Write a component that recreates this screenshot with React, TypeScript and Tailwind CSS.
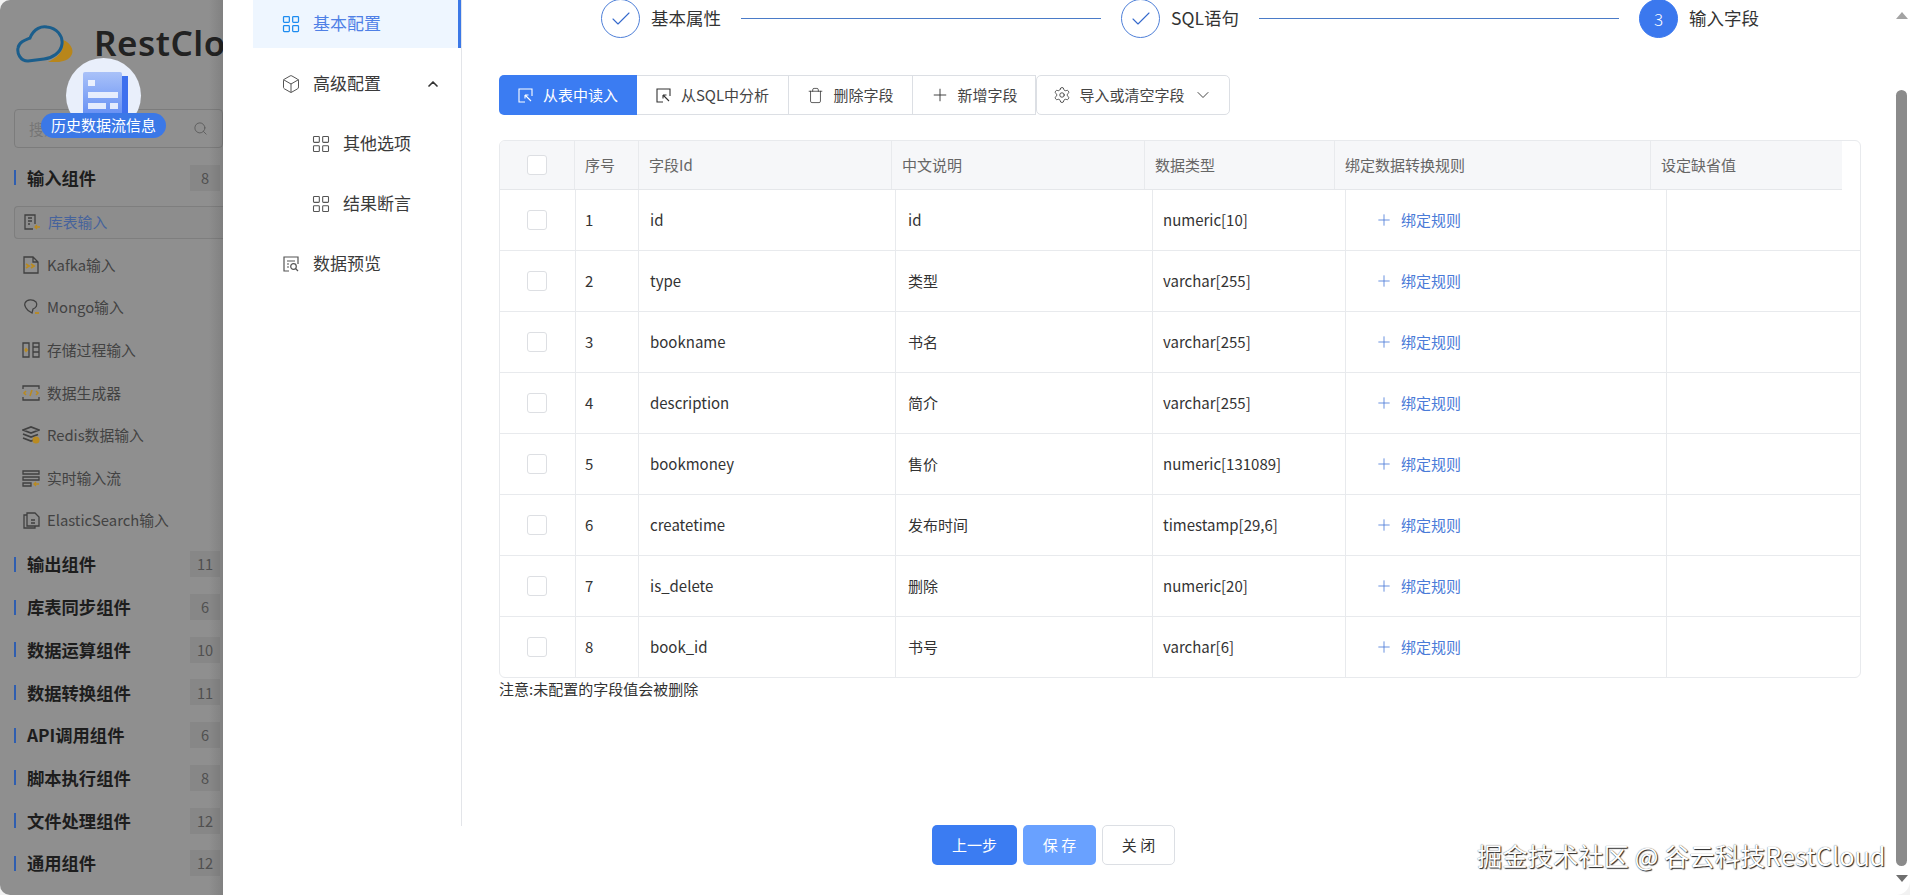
import { Box, Check, ChevronDown, ChevronUp, LayoutGrid, Plus, Search, Settings, Trash } from 'lucide-react'
import React from 'react'

const fields = [
  { id: 'id', name: 'id', type: 'numeric[10]' },
  { id: 'type', name: '类型', type: 'varchar[255]' },
  { id: 'bookname', name: '书名', type: 'varchar[255]' },
  { id: 'description', name: '简介', type: 'varchar[255]' },
  { id: 'bookmoney', name: '售价', type: 'numeric[131089]' },
  { id: 'createtime', name: '发布时间', type: 'timestamp[29,6]' },
  { id: 'is_delete', name: '删除', type: 'numeric[20]' },
  { id: 'book_id', name: '书号', type: 'varchar[6]' },
]

const sections = [
  ['库表同步组件', 6],
  ['数据运算组件', 10],
  ['数据转换组件', 11],
  ['API调用组件', 6],
  ['脚本执行组件', 8],
  ['文件处理组件', 12],
  ['通用组件', 12],
] as const

function SideIcon({ kind }: { kind: string }) {
  const s = '#404040'
  const g = '#b98a20'
  return (
    <svg width="18" height="18" viewBox="0 0 18 18" fill="none" stroke={s} strokeWidth="1.3">
      {kind === 'table' && (
        <>
          <path d="M12 11V2H2v14h8M5 5h4M5 8h4M5 11h2" />
          <path d="M17 14h-5M14 12l-2 2 2 2" stroke={g} />
        </>
      )}
      {kind === 'kafka' && (
        <>
          <path d="M2 1h9l5 5v11H2zM11 1v5h5" />
          <path d="M4 8l3 2-3 2M9 8l3 2-3 2" stroke={g} strokeWidth="1.8" />
        </>
      )}
      {kind === 'mongo' && (
        <>
          <path d="M3 5c2-4 8-4 11-1 2 3 0 6-3 7l-1 4c-2-1-5-3-6-5-1-2-2-3-1-5z" />
          <path d="M17 15h-4" stroke={g} strokeWidth="1.8" />
        </>
      )}
      {kind === 'proc' && (
        <>
          <path d="M1 2h6v14H1zM11 2h6v14h-6zM11 6h6M11 11h6" />
          <path d="M6 9H3M4.500 7L3 9l1.500 2" stroke={g} />
        </>
      )}
      {kind === 'gen' && (
        <>
          <path d="M1 5V2h16v3M1 13v3h16v-3" />
          <path d="M4 7L2 9l2 2M14 7l2 2-2 2M10 6L8 12" stroke={g} strokeWidth="1.5" />
        </>
      )}
      {kind === 'redis' && (
        <>
          <path d="M1 4l8-3 8 3-8 3zM1 8l8 3 7-2.500M1 12l8 3 3-1" strokeWidth="1.8" />
          <circle cx="14" cy="14" r="3.500" fill={g} stroke="none" />
        </>
      )}
      {kind === 'stream' && (
        <>
          <path d="M1 2h16v3H1zM1 8h16v3H1zM1 14h8v3H1z" />
          <path d="M17 15h-5M14 13l-2 2 2 2" stroke={g} />
        </>
      )}
      {kind === 'es' && (
        <>
          <path d="M5 2h8l4 4v9H5z" />
          <path d="M5 4H2v13h11v-2M9 9h4M9 12h4" />
        </>
      )}
    </svg>
  )
}

function PickIcon({ color }: { color: string }) {
  return (
    <svg width="15" height="15" viewBox="0 0 15 15" fill="none" stroke={color} strokeWidth="1.100">
      <path d="M7 14H1V1h13v7" />
      <path d="M7 7l6 6M7 7h3.500M7 7v3.500" />
    </svg>
  )
}

function PreviewIcon() {
  return (
    <svg width="20" height="16" viewBox="-2 0 20 16" fill="none" stroke="#555" strokeWidth="1.200">
      <path d="M6 15H1V1h14v7M4 5h8M4 8h2M4 11h2" />
      <circle cx="10.500" cy="10.500" r="2.800" />
      <path d="M12.500 12.500L15 15" />
    </svg>
  )
}

function SideItem({ icon, label, active }: { icon: string; label: string; active?: boolean }) {
  return (
    <div className={`flex h-[42.600px] items-center ${active ? 'mt-[2px]' : ''}`}>
      <div
        className={`flex h-[33px] w-full items-center gap-[7px] rounded-l-[4px] pl-[8px] ${
          active ? 'border border-r-0 border-[#7e7e7e] bg-[#8d8d8d] text-[#46639c]' : 'text-[#424242]'
        }`}
      >
        <SideIcon kind={icon} />
        <span className="text-[14.800px]">{label}</span>
      </div>
    </div>
  )
}

function SectionRow({ label, count, className }: { label: string; count: number; className: string }) {
  return (
    <div className={`flex items-center ${className}`}>
      <span className="h-[15px] w-[2px] bg-[#2f5eb0]" />
      <span className="ml-[11px] flex-1 text-[17.300px] font-bold text-[#1d1d1d]">{label}</span>
      <span className="mr-[3px] flex h-[26px] w-[30px] items-center justify-center bg-[#878787] text-[14.600px] text-[#505050]">
        {count}
      </span>
    </div>
  )
}

function Sidebar() {
  return (
    <aside className="relative h-full w-[223px] shrink-0 overflow-hidden rounded-l-[10px] bg-[#8f8f8f]">
      <div className="flex h-[109px] items-start pl-[16px] pt-[24px]">
        <svg width="58" height="40" viewBox="16 24 58 40" fill="none" className="shrink-0">
          <path
            d="M63 40C70 42 74 50 72 54C70 60 62 62 57 62L48 62C56 58 65 52 63 40Z"
            fill="#b8861b"
          />
          <path
            d="M30 38C34 28 42 26 47 27C57 28 63 36 62 44C61 53 52 58 44 59L28 61C20 61 17 53 18 48C19 42 25 40 30 38Z"
            stroke="#1b5e8c"
            strokeWidth="3"
          />
        </svg>
        <span className="ml-[20px] whitespace-nowrap font-['Noto_Sans',sans-serif] text-[35px] font-semibold leading-[38px] tracking-[0.5px] text-[#222]">
          RestCloud
        </span>
      </div>
      <div className="ml-[14px] flex h-[39px] items-center justify-between rounded-[4px] border border-[#7c7c7c] pl-[14px] pr-[14px]">
        <span className="text-[14.600px] text-[#767676]">搜索组件</span>
        <Search size={15} strokeWidth={1.400} className="text-[#5a5a5a]" />
      </div>
      <div className="mt-[8px] pl-[14px]">
        <SectionRow label="输入组件" count={8} className="h-[43px]" />
        <SideItem icon="table" label="库表输入" active />
        <SideItem icon="kafka" label="Kafka输入" />
        <SideItem icon="mongo" label="Mongo输入" />
        <SideItem icon="proc" label="存储过程输入" />
        <SideItem icon="gen" label="数据生成器" />
        <SideItem icon="redis" label="Redis数据输入" />
        <SideItem icon="stream" label="实时输入流" />
        <SideItem icon="es" label="ElasticSearch输入" />
        <SectionRow label="输出组件" count={11} className="mt-px h-[43px]" />
        {sections.map(([label, count]) => (
          <SectionRow key={label} label={label} count={count} className="h-[42.700px]" />
        ))}
      </div>
      <div className="absolute inset-y-0 right-0 w-[14px] bg-gradient-to-l from-black/10 to-transparent" />

      {/* floating history button */}
      <div className="absolute left-[66px] top-[58px] h-[75px] w-[75px] overflow-hidden rounded-full bg-[#e9effb]">
        <div className="absolute left-[17px] top-[14px] h-[50px] w-[39px] rounded-[2px] bg-gradient-to-b from-[#a9c1f8] to-[#5c87f2]" />
        <div className="absolute left-[56px] top-[18px] h-[46px] w-[6px] bg-[#3e70ee]" />
        <div className="absolute left-[22px] top-[22px] h-[6px] w-[7px] bg-white/80" />
        <div className="absolute left-[22px] top-[34px] h-[6px] w-[30px] bg-white/80" />
        <div className="absolute left-[22px] top-[45px] h-[6px] w-[18px] bg-white/80" />
        <div className="absolute left-[44px] top-[45px] h-[6px] w-[8px] bg-white/80" />
      </div>
      <div className="absolute left-[41px] top-[113px] flex h-[25px] w-[125px] items-center justify-center rounded-full bg-[#3b78e7] text-[15px] text-white">
        历史数据流信息
      </div>
    </aside>
  )
}

function NavRow({
  icon,
  label,
  sub,
  active,
  right,
}: {
  icon: React.ReactNode
  label: string
  sub?: boolean
  active?: boolean
  right?: React.ReactNode
}) {
  return (
    <div
      className={`flex h-[48px] items-center gap-[12px] ${sub ? 'pl-[58px]' : 'pl-[28px]'} ${
        active ? 'border-r-[3px] border-[#3b78e7] bg-[#eef6ff] text-[#4f80e6]' : 'text-[#3a3a3a]'
      }`}
    >
      {icon}
      <span className="flex-1 pb-[2px] text-[17px]">{label}</span>
      {right}
    </div>
  )
}

function ConfigNav() {
  return (
    <nav className="ml-[30px] flex h-[826px] w-[209px] shrink-0 flex-col gap-[12px] border-r border-[#e3e5e9]">
      <NavRow active label="基本配置" icon={<LayoutGrid size={20} strokeWidth={1.500} className="text-[#1d8cf0]" />} />
      <NavRow
        label="高级配置"
        icon={<Box size={20} strokeWidth={1.200} className="text-[#555]" />}
        right={<ChevronUp size={16} strokeWidth={2.500} className="mr-[20px] text-[#333]" />}
      />
      <NavRow sub label="其他选项" icon={<LayoutGrid size={20} strokeWidth={1.300} className="text-[#555]" />} />
      <NavRow sub label="结果断言" icon={<LayoutGrid size={20} strokeWidth={1.300} className="text-[#555]" />} />
      <NavRow label="数据预览" icon={<PreviewIcon />} />
    </nav>
  )
}

function Step({ label, done, num }: { label: string; done?: boolean; num?: number }) {
  return (
    <>
      <span
        className={`flex h-[39px] w-[39px] shrink-0 items-center justify-center rounded-full border ${
          done ? 'border-[#4f80d8] text-[#3569cc]' : 'border-[#3b78ee] bg-[#3b78ee] text-white'
        }`}
      >
        {done ? <Check size={24} strokeWidth={1.100} /> : <span className="text-[17px] font-light">{num}</span>}
      </span>
      <span className="ml-[11px] text-[17.500px] text-[#333]">{label}</span>
    </>
  )
}

function ToolButton({
  icon,
  label,
  primary,
  className,
}: {
  icon: React.ReactNode
  label: string
  primary?: boolean
  className: string
}) {
  return (
    <div
      className={`flex h-[40px] items-center justify-center text-[15px] ${className} ${
        primary ? 'bg-[#3b7cf2] text-white' : 'border-y border-r border-[#dcdfe4] text-[#444]'
      }`}
    >
      {icon}
      <span>{label}</span>
    </div>
  )
}

function Checkbox() {
  return <span className="block h-[20px] w-[20px] rounded-[3px] border border-[#dddfe3] bg-white" />
}

function FieldTable() {
  const head = ['序号', '字段Id', '中文说明', '数据类型', '绑定数据转换规则', '设定缺省值']
  return (
    <div className="mt-[25px] w-[1362px] overflow-hidden rounded-[6px] border border-[#e8eaed]">
      <div className="grid h-[49px] w-[1342px] grid-cols-[75px_64px_253px_253px_190px_316px_191px] border-b border-[#e5e7ea] bg-[#f6f7f9] text-[15px] text-[#666]">
        <div className="flex items-center justify-center border-r border-[#e8eaed]">
          <Checkbox />
        </div>
        {head.map((h, i) => (
          <div
            key={h}
            className={`flex items-center pl-[10px] pt-px ${i < head.length - 1 ? 'border-r border-[#e8eaed]' : ''}`}
          >
            {h}
          </div>
        ))}
      </div>
      {fields.map((f, i) => (
        <div
          key={f.id}
          className={`grid grid-cols-[76px_63px_257px_257px_193px_321px_1fr] text-[15px] text-[#333] ${
            i < fields.length - 1 ? 'h-[61px] border-b border-[#e8eaed]' : 'h-[60px]'
          }`}
        >
          <div className="flex items-center justify-center border-r border-[#e8eaed] pr-px">
            <Checkbox />
          </div>
          <div className="flex items-center border-r border-[#e8eaed] pl-[9px]">{i + 1}</div>
          <div className="flex items-center border-r border-[#e8eaed] pl-[11px]">{f.id}</div>
          <div className="flex items-center border-r border-[#e8eaed] pl-[12px]">{f.name}</div>
          <div className="flex items-center border-r border-[#e8eaed] pl-[10px]">{f.type}</div>
          <div className="flex items-center gap-[8px] border-r border-[#e8eaed] pl-[29px] text-[#4a7bd8]">
            <Plus size={18} strokeWidth={1.100} />
            绑定规则
          </div>
          <div />
        </div>
      ))}
    </div>
  )
}

function MainPanel() {
  return (
    <main className="flex h-full flex-1 flex-col pl-[37px]">
      <div className="-mt-px ml-[102px] flex h-[39px] w-[1158px] shrink-0 items-center">
        <Step label="基本属性" done />
        <span className="mx-[20px] h-px flex-1 bg-[#4a7bc8]" />
        <Step label="SQL语句" done />
        <span className="mx-[20px] h-px flex-1 bg-[#4a7bc8]" />
        <Step label="输入字段" num={3} />
      </div>

      <div className="mt-[37px] flex shrink-0">
        <ToolButton
          primary
          className="w-[138px] gap-[10px] rounded-l-[5px]"
          icon={<PickIcon color="#fff" />}
          label="从表中读入"
        />
        <ToolButton className="w-[152px] gap-[10px]" icon={<PickIcon color="#333" />} label="从SQL中分析" />
        <ToolButton
          className="w-[124px] gap-[9px]"
          icon={<Trash size={17} strokeWidth={1.100} className="text-[#333]" />}
          label="删除字段"
        />
        <ToolButton
          className="w-[123px] gap-[7px]"
          icon={<Plus size={20} strokeWidth={1.100} className="text-[#333]" />}
          label="新增字段"
        />
        <div className="flex h-[40px] w-[194px] items-center justify-center gap-[8px] rounded-[5px] border border-[#dcdfe4] text-[15px] text-[#444]">
          <Settings size={18} strokeWidth={1.100} className="text-[#333]" />
          <span>导入或清空字段</span>
          <ChevronDown size={20} strokeWidth={1.100} className="text-[#333]" />
        </div>
      </div>

      <FieldTable />
      <p className="mt-0 text-[15px] text-[#333]">注意:未配置的字段值会被删除</p>

      <div className="mb-[30px] mt-auto flex gap-[6px] pl-[433px] text-[15px]">
        <button className="h-[40px] w-[85px] rounded-[5px] bg-[#3b7cf2] text-white">上一步</button>
        <button className="h-[40px] w-[73px] rounded-[5px] bg-[#69a1ff] text-white">保 存</button>
        <button className="h-[40px] w-[73px] rounded-[5px] border border-[#dcdfe4] bg-white text-[#333]">关 闭</button>
      </div>
    </main>
  )
}

function Scrollbar() {
  return (
    <div className="flex h-full w-[17px] shrink-0 flex-col items-center pt-[12px]">
      <span className="h-0 w-0 border-x-[6px] border-b-[7px] border-x-transparent border-b-[#a3a3a3]" />
      <span className="mt-[71px] h-[776px] w-[11px] rounded-full bg-[#8b8b8b]" />
      <span className="mt-[9px] h-0 w-0 border-x-[6px] border-t-[7px] border-x-transparent border-t-[#6f6f6f]" />
    </div>
  )
}

export default function App() {
  return (
    <div className="relative flex h-[895px] w-[1910px] overflow-hidden bg-[#f2f2f2] font-['Noto_Sans_CJK_SC','Noto_Sans',sans-serif]">
      <Sidebar />
      <div className="flex h-full flex-1 overflow-hidden rounded-br-[14px] bg-white">
        <ConfigNav />
        <MainPanel />
        <Scrollbar />
      </div>
      <div className="absolute left-[1477px] top-[840px] whitespace-nowrap text-[25.300px] leading-[30px] text-white [text-shadow:1px_1px_1px_#222,0_0_1px_#555]">
        掘金技术社区 @ 谷云科技RestCloud
      </div>
    </div>
  )
}
